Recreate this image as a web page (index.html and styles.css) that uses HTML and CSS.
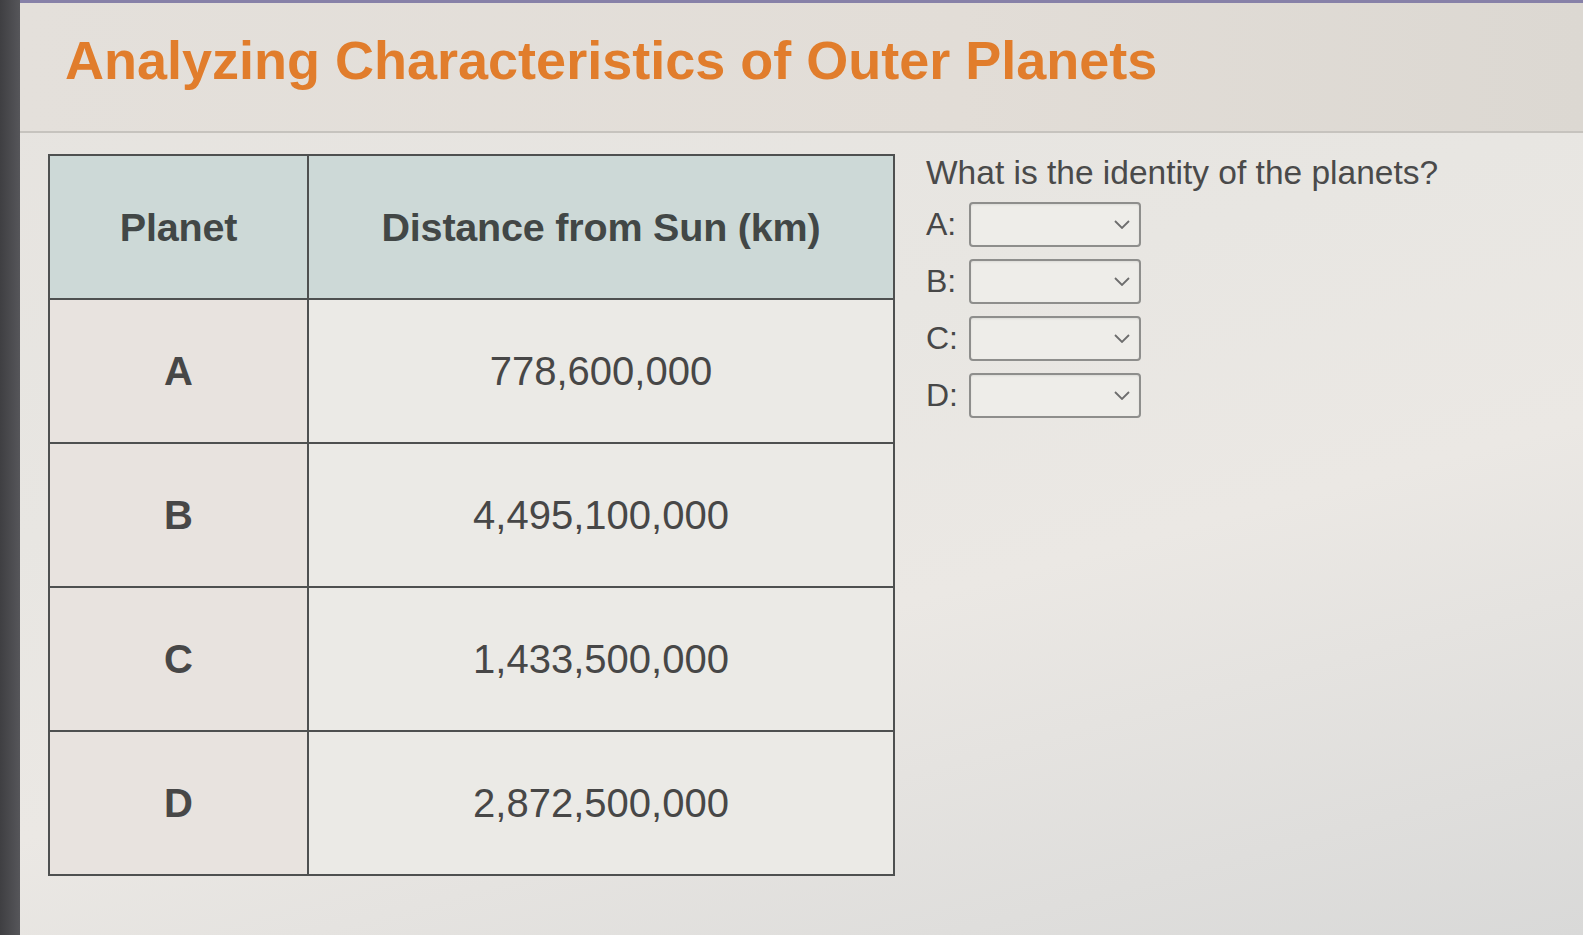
FILE: index.html
```html
<!DOCTYPE html>
<html lang="en">
<head>
<meta charset="utf-8">
<title>Analyzing Characteristics of Outer Planets</title>
<link rel="stylesheet" href="styles.css">
</head>
<body>
<div class="frame">
  <div class="strip"></div>
  <div class="page">
    <div class="topline"></div>
    <header class="header">
      <h1 class="title">Analyzing Characteristics of Outer Planets</h1>
    </header>
    <main class="main">
      <table class="planets">
        <thead>
          <tr><th class="col-planet">Planet</th><th class="col-dist">Distance from Sun (km)</th></tr>
        </thead>
        <tbody>
          <tr><td class="letter">A</td><td class="num">778,600,000</td></tr>
          <tr><td class="letter">B</td><td class="num">4,495,100,000</td></tr>
          <tr><td class="letter">C</td><td class="num">1,433,500,000</td></tr>
          <tr><td class="letter">D</td><td class="num">2,872,500,000</td></tr>
        </tbody>
      </table>
      <section class="question">
        <p class="prompt">What is the identity of the planets?</p>
        <div class="answers">
          <div class="answer"><span class="label">A:</span><div class="select"><svg class="chev" viewBox="0 0 16 9"><path d="M1 1 L8 8 L15 1" /></svg></div></div>
          <div class="answer"><span class="label">B:</span><div class="select"><svg class="chev" viewBox="0 0 16 9"><path d="M1 1 L8 8 L15 1" /></svg></div></div>
          <div class="answer"><span class="label">C:</span><div class="select"><svg class="chev" viewBox="0 0 16 9"><path d="M1 1 L8 8 L15 1" /></svg></div></div>
          <div class="answer"><span class="label">D:</span><div class="select"><svg class="chev" viewBox="0 0 16 9"><path d="M1 1 L8 8 L15 1" /></svg></div></div>
        </div>
      </section>
    </main>
  </div>
</div>
</body>
</html>
```

FILE: styles.css
```css
html, body {
  margin: 0;
  padding: 0;
  height: 100%;
}
body {
  font-family: "Liberation Sans", Arial, sans-serif;
  background: #e4e2de;
  overflow: hidden;
}
.frame {
  display: flex;
  height: 935px;
}
.strip {
  width: 20px;
  flex: none;
  background: linear-gradient(to right, #3f3f42, #56565a);
}
.page {
  flex: 1;
  display: flex;
  flex-direction: column;
  background: linear-gradient(165deg, #e6e3df 0%, #e8e6e2 40%, #ebe8e4 62%, #d9d9d8 100%);
}
.topline {
  height: 3px;
  background: #8781a8;
}
.header {
  height: 130px;
  box-sizing: border-box;
  padding: 30px 0 0 45px;
  background: linear-gradient(to right, #e4e0db, #e2ddd7 60%, #dcd8d2);
  border-bottom: 2px solid #c6c3be;
}
.title {
  margin: 0;
  font-size: 54px;
  line-height: 54px;
  font-weight: bold;
  color: #e17d2c;
}
.main {
  display: flex;
  align-items: flex-start;
  padding: 21px 0 0 28px;
}
.planets {
  border-collapse: collapse;
  border: 2px solid #4e5050;
  flex: none;
}
.planets th, .planets td {
  border: 2px solid #4e5050;
  text-align: center;
  padding: 0;
  height: 142px;
}
.planets th {
  background: #cdd9d7;
  color: #424746;
  font-size: 39.5px;
  font-weight: bold;
  letter-spacing: -0.2px;
}
.col-planet { width: 257px; }
.col-dist { width: 584px; }
.planets td {
  background: #e9e6e2;
  color: #474747;
  font-size: 40px;
}
.planets td.letter {
  font-weight: bold;
  background: #e8e3df;
}
.planets td.num {
  background: #ebeae6;
}
.question {
  margin-left: 31px;
  color: #4a4a4a;
}
.prompt {
  margin: 0;
  font-size: 33.5px;
  line-height: 38px;
}
.answers {
  display: flex;
  flex-direction: column;
  gap: 12px;
  margin-top: 10px;
}
.answer {
  display: flex;
  align-items: center;
}
.label {
  width: 43px;
  font-size: 32px;
  color: #474747;
}
.select {
  width: 172px;
  height: 45px;
  box-sizing: border-box;
  border: 2px solid #8e8e8c;
  border-radius: 4px;
  background: #eeede9;
  box-shadow: inset 0 1px 2px rgba(0,0,0,0.08);
  display: flex;
  align-items: center;
  justify-content: flex-end;
  padding-right: 9px;
}
.chev {
  width: 16px;
  height: 9px;
}
.chev path {
  fill: none;
  stroke: #6d6d6d;
  stroke-width: 1.8;
}
```
